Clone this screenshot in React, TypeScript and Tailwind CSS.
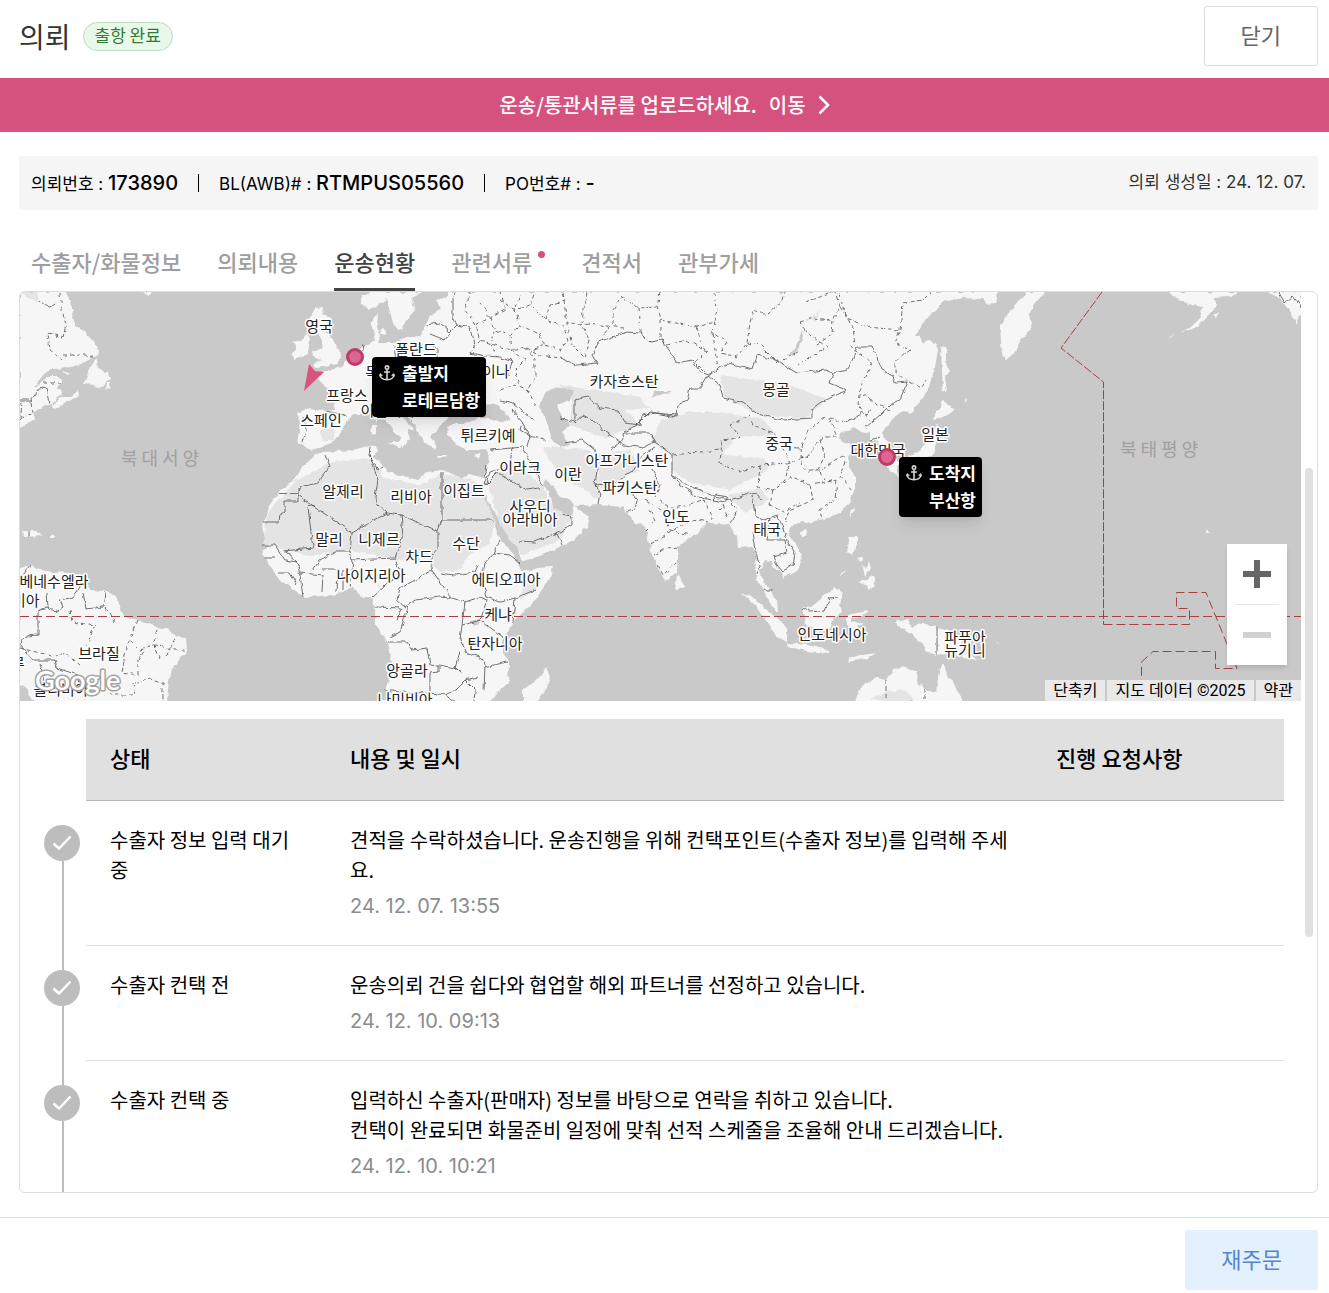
import { useState } from 'react'

const tabs = [
  { label: '수출자/화물정보' },
  { label: '의뢰내용' },
  { label: '운송현황' },
  { label: '관련서류', dot: true },
  { label: '견적서' },
  { label: '관부가세' },
]

const history = [
  {
    status: '수출자 정보 입력 대기 중',
    lines: ['견적을 수락하셨습니다. 운송진행을 위해 컨택포인트(수출자 정보)를 입력해 주세요.'],
    date: '24. 12. 07. 13:55',
  },
  {
    status: '수출자 컨택 전',
    lines: ['운송의뢰 건을 쉽다와 협업할 해외 파트너를 선정하고 있습니다.'],
    date: '24. 12. 10. 09:13',
  },
  {
    status: '수출자 컨택 중',
    lines: [
      '입력하신 수출자(판매자) 정보를 바탕으로 연락을 취하고 있습니다.',
      '컨택이 완료되면 화물준비 일정에 맞춰 선적 스케줄을 조율해 안내 드리겠습니다.',
    ],
    date: '24. 12. 10. 10:21',
  },
]

// Land outlines, in world pixels at zoom 2
const land = [
  // North America, east coast
  '20,292 66,292 73,310 74,325 83,330 93,340 98,350 97,357 92,358 83,363 73,367 52,368 43,375 35,387 40,384 47,377 58,377 62,380 57,387 62,394 52,403 40,408 33,413 35,420 20,428',
  '53,405 62,396 70,396 78,391 79,395 63,405 55,409',
  '97,358 98,368 108,373 110,380 102,385 97,389 95,385 83,384 87,377 92,365',
  '107,383 110,383 110,389 106,388',
  '62,371 71,373 68,375',
  '142,292 152,292 148,295',
  // British Isles
  '315,308 323,307 322,315 332,318 328,325 323,329 332,337 338,350 341,357 338,364 315,367 312,365 323,360 315,358 313,352 322,348 323,343 320,338 317,333 310,327 310,318',
  '293,342 302,340 307,333 310,340 308,353 295,359 292,355 297,348',
  // Scandinavia
  '360,302 368,310 385,302 387,297 388,305 392,320 397,330 403,329 405,322 415,310 412,300 422,292 370,292 362,296',
  '382,329 388,330 386,335 381,334',
  // Eurasia
  '315,378 322,373 330,370 342,367 345,362 355,355 360,348 367,345 375,340 372,327 372,318 378,313 377,327 380,337 378,343 393,343 407,338 420,337 423,330 427,323 430,315 442,310 437,300 447,297 447,292 997,292 995,302 987,303 983,299 963,298 953,300 942,302 930,315 915,335 920,337 923,343 928,340 937,345 938,350 935,367 928,390 917,405 910,413 900,412 887,425 882,433 888,443 895,457 899,463 897,477 892,473 886,463 883,450 878,442 870,440 870,433 857,430 855,427 840,433 839,440 848,443 853,450 847,458 850,467 855,477 855,487 850,502 840,513 820,520 807,523 802,522 795,522 790,528 788,535 795,543 800,553 802,562 797,570 783,578 782,572 773,567 772,562 765,560 760,570 763,582 770,590 777,600 778,612 772,607 765,593 757,580 755,570 757,557 752,547 738,548 737,537 728,525 713,523 708,522 697,533 678,547 678,557 677,572 665,581 658,568 650,550 647,533 643,525 635,523 627,513 622,507 600,505 577,506 570,500 560,496 552,486 545,480 544,486 550,494 553,507 562,515 572,517 575,503 578,510 590,517 587,527 573,540 563,545 550,552 522,562 519,553 517,547 507,530 497,517 487,500 482,488 484,477 487,465 488,453 485,449 478,450 467,450 453,443 448,435 447,427 455,424 460,420 448,418 442,425 435,432 430,437 437,445 435,450 427,445 420,435 415,425 408,417 400,408 390,400 395,412 405,420 415,430 408,430 410,440 402,447 400,437 390,425 378,412 370,410 362,415 352,415 347,423 340,433 335,440 323,447 310,450 303,445 297,444 300,423 297,413 310,408 327,411 335,410 333,398 330,390 322,383',
  '388,442 402,442 399,448',
  '371,425 376,425 376,435 372,435',
  '373,417 376,413 376,422',
  '437,455 447,455 446,457 438,457',
  '475,456 482,453 479,458',
  // Africa
  '484,478 473,475 460,478 442,470 427,472 418,480 407,477 387,472 385,467 373,457 378,450 370,445 353,450 323,452 315,455 310,460 302,467 295,480 280,491 268,507 262,527 267,545 262,553 267,562 278,578 293,590 303,597 323,596 337,594 353,588 362,597 372,597 375,607 375,623 388,643 393,667 385,690 392,702 490,702 497,693 508,683 509,662 503,653 503,640 513,622 533,603 550,578 553,567 537,568 522,572 518,562 510,550 500,540 493,520 485,507 479,492',
  '547,668 550,677 547,687 537,702 523,702 523,690 533,683',
  // South America
  '20,568 30,565 40,570 53,572 70,573 87,578 90,590 107,591 117,598 123,615 137,620 157,627 170,630 177,637 186,638 187,650 178,663 170,673 168,690 167,702 35,702 27,690 20,685',
  '22,531 35,531 43,536 23,537',
  '50,536 55,536 55,538 50,538',
  // Far East
  '1027,292 1007,315 1000,327 1002,353 1006,361 1013,355 1018,345 1023,337 1032,328 1030,312 1035,302 1045,292',
  '941,346 946,347 946,360 950,372 945,378 947,390 943,392 942,373',
  '942,400 955,410 943,418 933,420 935,413 940,408',
  '937,423 940,433 935,450 933,456 917,458 905,462 907,457 917,453 927,443 933,433',
  '963,402 967,399 965,403',
  '850,510 855,507 851,517',
  '800,532 807,530 806,536 801,536',
  // Alaska and the west coast
  '1168,292 1180,300 1192,305 1203,307 1200,317 1190,327 1180,333 1197,327 1210,313 1217,305 1213,298 1230,297 1240,292',
  '1168,338 1175,335 1171,336',
  '1213,315 1220,312 1217,318',
  '1267,292 1280,298 1290,312 1297,325 1298,317 1302,313 1302,292',
  '1206,529 1210,532 1206,532',
  // South-east Asia
  '677,573 685,587 678,591 676,583',
  '742,593 750,595 767,610 783,623 787,627 787,642 777,637 767,622 757,607',
  '787,643 807,645 828,650 828,653 807,651 788,647',
  '835,587 843,593 840,603 842,612 833,620 830,630 813,628 805,622 802,607 810,608 822,598',
  '847,615 868,611 868,613 852,618 850,623 863,622 857,627 860,640 853,638 850,628 847,634',
  '850,536 857,536 857,545 853,555 847,552',
  '858,582 867,580 873,575 875,585 868,590 865,585',
  '840,577 846,569 844,574',
  '857,558 863,556 862,562',
  '862,564 866,570 869,562 871,568 865,576',
  '847,658 862,655 875,653 866,659 848,662',
  '895,622 907,618 912,627 922,623 937,627 953,633 963,643 970,655 977,661 963,658 950,653 937,656 927,653 922,643 913,635 900,627',
  '996,641 1000,645 998,644',
  '855,702 860,687 877,677 887,680 893,670 902,666 918,672 917,682 927,690 937,692 940,670 943,663 948,677 955,682 958,693 963,702',
]

const water = [
  '448,418 455,400 465,395 480,400 487,405 495,403 505,412 510,420 500,422 480,417 465,424 452,424',
  '543,395 550,388 575,390 570,400 557,405 560,415 570,423 562,432 570,445 560,448 552,440 548,425 540,407',
  '785,357 795,350 802,330 803,340 795,354',
  '470,621 479,619 480,624 473,626',
  '650,397 655,391 672,391 660,395',
]

const desert = [
  '263,545 267,512 295,482 330,462 370,458 385,478 420,485 440,475 475,480 495,520 490,545 470,553 460,570 440,572 425,560 400,560 350,550 310,556 283,549',
  '487,482 512,462 543,486 553,507 572,517 560,540 522,555 500,525',
  '543,447 590,450 598,470 600,500 585,490 568,480 550,460',
  '560,385 610,392 640,398 650,408 625,410 640,425 605,438 570,425 572,400',
  '597,455 630,450 640,470 620,480 600,488',
  '660,420 690,412 720,412 765,420 775,435 735,438 722,455 765,458 768,470 730,490 690,482 672,470 672,455 652,442',
  '720,375 790,385 828,400 805,418 760,415 725,398',
  '20,292 38,292 39,303 28,298',
  '525,575 540,572 535,590 520,600',
  '870,700 885,692 905,690 915,702',
  '728,495 760,488 770,500 745,512',
  '320,430 333,428 335,440 322,442',
  '810,318 820,310 815,322',
]

const borders = [
  '20,400 31,400 41,387 46,388 49,403',
  '39,300 48,308 55,303',
  '455,292 453,300 453,317 457,325 470,328 475,350',
  '427,325 440,323 450,332 457,325',
  '430,334 445,340 450,333',
  '395,345 397,360',
  '432,342 437,350 437,357',
  '364,345 362,355 355,363',
  '470,353 485,356 500,357 512,362 508,375',
  '500,400 510,402 525,413 535,420',
  '512,410 522,422 530,436 545,440',
  '522,423 520,430 530,436 527,446',
  '304,418 306,430 303,443',
  '327,411 348,416',
  '560,358 577,365 597,363 592,355 598,342 627,332 640,333 650,342 662,340 678,363 692,360 702,373 708,375',
  '708,375 727,364 753,370 757,355 775,360 797,373 825,370 833,373 848,370 857,347 873,347 882,370 893,375 895,383 908,382 900,400 890,405 880,415 865,428',
  '833,373 830,383 847,390 822,402 812,410 812,418 783,420 760,415 743,403 723,398 720,385 708,375',
  '708,375 700,388 690,388 687,400 678,405 677,417 650,412 637,425 625,432',
  '560,418 575,422 575,400 587,397 600,408 617,410 625,423 640,425 642,415 655,413 677,415',
  '575,422 583,415 597,423 605,432 620,442 610,450',
  '620,442 625,433 650,433 655,442 643,448 625,445 620,442',
  '565,443 582,440 595,450 597,470 595,485 600,492 598,505',
  '595,485 615,483 632,472 642,455 655,447',
  '655,442 672,455 672,475 690,487 715,497 730,500 755,492 762,500',
  '672,475 680,485 695,495 710,500',
  '713,500 717,495 728,497 725,502 713,500',
  '730,500 737,510 733,520 730,524',
  '752,495 755,515 765,520 770,518',
  '632,492 637,500 635,510 627,512',
  '655,497 660,485 652,470',
  '770,518 767,540 785,540 787,553 773,557 777,565 783,572',
  '770,518 778,515 787,540 795,553 793,565 783,571',
  '752,533 755,550 760,565 757,575',
  '763,587 767,590 772,590',
  '870,440 880,437',
  '802,608 810,612 825,610 830,598 838,597',
  '937,627 937,656',
  '263,522 279,522 280,515 285,512 285,501 298,501 298,488',
  '298,493 300,487 318,483 322,477 330,467 326,455',
  '298,495 352,533 387,513 378,505 375,497 378,480 370,455',
  '370,446 369,455 378,470 383,467',
  '315,505 308,507 313,548 283,551',
  '387,513 401,515 438,531 438,548 432,555 432,570 400,588 397,600',
  '442,472 442,520 438,531',
  '442,520 493,520',
  '401,515 403,535 395,558 352,560 350,552 352,533',
  '350,552 335,552 320,560 313,570',
  '395,558 400,572 385,585 372,597',
  '432,570 445,590 452,598',
  '440,573 455,575 475,572 478,565',
  '500,540 493,553 485,563 482,580 487,597 500,602 515,598 513,622',
  '493,553 510,555 520,563',
  '515,598 535,590',
  '397,600 405,607 415,600 440,597 452,598 465,602 480,597 487,600',
  '410,602 400,632 390,637',
  '375,607 402,608 397,620',
  '465,602 462,625 480,620 487,600',
  '480,620 503,637',
  '462,625 460,640 467,653 480,657 485,665 484,690',
  '388,642 407,642 412,650 427,648 430,665 438,666 438,672 430,673 430,693',
  '385,690 400,692 430,693 445,695 455,690 465,680 478,677',
  '438,665 455,668 462,672 455,668 460,652',
  '445,695 455,702',
  '465,680 475,690 474,702',
  '484,667 508,662',
  '262,545 275,545 285,560 297,562 300,575 303,597',
  '285,551 297,562',
  '264,558 275,558',
  '300,573 323,575 322,592',
  '278,573 290,573 297,585',
  '323,569 338,569 337,592',
  '343,570 343,590',
  '353,560 350,588',
  '518,541 535,542 545,538 557,534 562,545',
  '557,534 572,525 572,517 562,515',
  '490,450 523,447 533,467 543,486',
  '485,485 497,473 527,490 540,488',
  '512,447 510,465 490,472 485,485',
  '487,465 484,485',
  '47,593 48,607 55,613 63,607 60,600 73,597 80,587 75,577',
  '83,592 86,609 103,607 105,592',
  '30,565 23,575',
  '48,607 38,610 38,635 26,636 20,645 33,660 55,660 57,668 78,675 82,690',
  '40,664 45,675 38,695',
  '29,531 29,537',
  '1279,293 1285,303 1293,296 1301,307',
]

const provinces = [
  '60,293 62,310 66,325 63,337 48,333 50,350 62,359',
  '63,355 92,355 92,360',
  '43,383 60,383',
  '22,402 20,427',
  '31,402 33,413 22,418',
  '470,355 480,340 475,325 490,318 505,310 500,292',
  '475,325 465,310 470,292',
  '490,318 495,330 510,335 520,325 515,310 530,305 545,320 560,325',
  '480,340 495,345 510,350 525,347 540,355 560,358',
  '495,330 490,342 497,357',
  '510,335 512,350 525,360 515,370 520,385',
  '520,325 540,335 545,345 530,352',
  '530,305 535,292',
  '545,320 550,305 565,300 562,292',
  '525,347 535,360 535,378 527,390 535,405',
  '545,345 560,350 568,340 563,325',
  '500,300 515,310 520,295',
  '480,302 490,318',
  '500,390 515,385 530,392',
  '563,293 567,323 600,325 623,328',
  '567,323 572,345 585,358 590,340 582,325',
  '588,293 583,313 582,325',
  '623,295 613,310 613,323 603,335',
  '623,297 638,308 657,307 660,292',
  '638,308 640,332 650,342',
  '657,307 660,320 697,327 715,322 717,310 715,293',
  '660,320 660,340 667,345 687,340 707,352 695,362 705,372',
  '697,327 700,340 707,352',
  '715,322 713,333 727,343 720,353 737,357 747,343',
  '713,333 715,350 718,368',
  '747,343 750,323 753,310 767,315 783,300 785,292',
  '747,343 760,345 773,358 780,362 798,352',
  '805,302 820,297 830,292',
  '800,322 813,318 833,320 840,307 835,292',
  '800,322 807,333 827,347 798,365',
  '840,307 853,327 855,345',
  '840,293 845,317 867,327 900,330 895,343 910,350 895,362 895,373 910,382',
  '900,330 903,303 923,300 930,293',
  '820,320 833,320 832,335 815,345',
  '850,345 857,353 872,362 860,387 858,403 870,422',
  '863,395 880,405 892,413',
  '845,422 867,413',
  '910,382 922,388 927,380',
  '730,425 750,415 753,425 773,433 782,447 800,448 808,430 825,417 845,422 870,410',
  '730,425 740,438 722,440 720,463 740,472 760,465 787,463 807,457',
  '673,455 720,450',
  '760,465 758,487 773,490 793,477 810,485 837,480',
  '807,457 823,437 837,437 830,420',
  '782,447 790,462 785,480 775,490',
  '800,448 803,470 820,470 835,460 845,455',
  '810,485 813,500 790,510 785,525',
  '837,480 835,500 820,510 822,520',
  '820,440 825,455 818,470 825,480',
  '845,462 840,475 852,490',
  '773,490 770,505 783,512 800,502',
  '645,500 660,510 690,505 705,500 712,520',
  '660,500 668,505 665,515 670,530 690,535',
  '650,545 665,535 680,525 697,520 708,522',
  '655,555 665,548 680,547',
  '658,565 663,575 677,562',
  '645,530 655,520 650,510',
  '718,510 723,505 727,515',
  '20,648 40,653 58,656 65,652 80,665',
  '70,610 72,622 95,625 87,645',
  '105,608 115,623',
  '137,620 130,638 125,655 122,672 138,675',
  '130,640 140,650 155,645 175,650 186,650',
  '157,630 153,645 160,660',
  '165,655 175,640',
  '138,675 138,660 145,650',
  '135,683 150,678 163,683 163,701',
  '133,683 135,695 110,695 108,685',
  '886,680 886,701',
  '924,688 924,701',
]

const countries = [
  ['영국', 319, 332], ['폴란드', 416, 355], ['독일', 379, 378], ['우크라이나', 475, 377],
  ['프랑스', 347, 401], ['이탈리아', 388, 416], ['스페인', 321, 426], ['튀르키예', 488, 441],
  ['이라크', 520, 473], ['이란', 568, 480], ['카자흐스탄', 624, 387], ['몽골', 776, 395],
  ['중국', 779, 449], ['일본', 935, 440], ['대한민국', 878, 456], ['아프가니스탄', 627, 466],
  ['파키스탄', 630, 493], ['인도', 676, 522], ['태국', 767, 535], ['알제리', 343, 497],
  ['리비아', 411, 502], ['이집트', 464, 496], ['사우디', 530, 512], ['아라비아', 530, 525],
  ['말리', 329, 545], ['니제르', 379, 545], ['차드', 419, 562], ['수단', 466, 549],
  ['나이지리아', 371, 581], ['에티오피아', 506, 585], ['케냐', 498, 620], ['탄자니아', 495, 649],
  ['앙골라', 407, 676], ['나미비아', 405, 705], ['인도네시아', 832, 640], ['파푸아', 965, 643],
  ['뉴기니', 965, 656], ['브라질', 99, 659], ['베네수엘라', 54, 587], ['콜롬비아', 12, 606],
  ['볼리비아', 61, 695], ['페루', 11, 669],
] as const

function WorldMap() {
  return (
    <svg viewBox="20 292 1281 409" className="block h-full w-full" aria-hidden="true">
      <defs>
        {/* roughens coasts and borders */}
        <filter id="coast" x="0" y="0" width="100%" height="100%">
          <feTurbulence type="fractalNoise" baseFrequency="0.14" numOctaves="2" seed="4" result="n" />
          <feDisplacementMap in="SourceGraphic" in2="n" scale="5" xChannelSelector="R" yChannelSelector="G" />
        </filter>
      </defs>
      <rect x="0" y="280" width="1340" height="440" fill="#c9c9c9" />
      <g filter="url(#coast)">
        <rect x="0" y="280" width="1340" height="440" fill="#c9c9c9" />
        {land.map((p) => <polygon key={p} points={p} fill="#f6f6f6" />)}
        {desert.map((p) => <polygon key={p} points={p} fill="#e4e4e4" />)}
        {water.map((p) => <polygon key={p} points={p} fill="#c9c9c9" />)}
        <g fill="none" stroke="#4d4d4d" strokeWidth="0.8">
          {borders.map((p) => <polyline key={p} points={p} />)}
          <g strokeDasharray="4 3">
            {provinces.map((p) => <polyline key={p} points={p} />)}
          </g>
        </g>
      </g>
      <path d="M279 493.500H298" stroke="#777" strokeDasharray="8 3" />
      <g fill="none" stroke="#a83f3f" strokeWidth="1" strokeDasharray="9 4">
        <path d="M20 616.500H1301" />
        <path d="M1102 292L1061 348L1103.500 382V624.500" strokeDasharray="9 2" />
        <path d="M1103.500 624.500H1189.500V608.500H1176.500V592.500H1206L1237 668.500H1215.500V651.500H1153L1141.500 662V701" />
      </g>
      <g fill="#a0a0a0" fontSize="18" letterSpacing="4" textAnchor="middle">
        <text x="162" y="465">북대서양</text>
        <text x="1161" y="456">북태평양</text>
      </g>
      <g fill="#222" stroke="#fff" strokeWidth="3" strokeLinejoin="round" paintOrder="stroke" fontSize="15" textAnchor="middle">
        {countries.map(([name, x, y]) => <text key={name} x={x} y={y}>{name}</text>)}
      </g>
      <text
        x="35" y="690" fontSize="27" fontWeight="600" fill="#fff" stroke="#a3a3a3" strokeWidth="3"
        paintOrder="stroke" strokeLinejoin="round" fontFamily="Lato, sans-serif"
      >
        Google
      </text>
      <path d="M309 364L315 371L324 372L304 391Z" fill="#d9537f" />
      <g fill="#dd6592" stroke="#c03a67" strokeWidth="3">
        <circle cx="355" cy="357" r="7.500" />
        <circle cx="887" cy="457" r="7.500" />
      </g>
    </svg>
  )
}

function PortLabel({ title, port, className }: { title: string; port: string; className: string }) {
  return (
    <div className={`absolute rounded-sm bg-black pt-[2px] pr-[6px] pb-1 pl-[7px] text-[17px] leading-[27px] font-bold text-white shadow-lg ${className}`}>
      <div className="flex items-center gap-[7px]">
        <svg width="16" height="16" viewBox="0 0 16 16" fill="none" stroke="#d4d4d4" strokeWidth="1.600">
          <circle cx="8" cy="2.600" r="1.700" />
          <path d="M8 4.500V15M5 7h6M1 9.500C1.500 13 4.500 14.800 8 14.800S14.500 13 15 9.500" />
          <path d="M0 11.500L1 8l3 2.500zM16 11.500L15 8l-3 2.500z" fill="#d4d4d4" stroke="none" />
        </svg>
        {title}
      </div>
      <div className="pl-[23px]">{port}</div>
    </div>
  )
}

export default function App() {
  const [active, setActive] = useState(2)

  return (
    <div className="flex h-screen flex-col overflow-hidden bg-white font-['Noto_Sans_CJK_KR',sans-serif] text-black">
      <header className="flex justify-between pt-[6px] pr-[11px] pb-3 pl-[19px]">
        <div className="flex h-[60px] items-center gap-3">
          <h1 className="text-[28px] leading-[42px] text-[#333]">의뢰</h1>
          <span className="rounded-full border border-[#b5dfb8] bg-[#eaf7eb] px-[11px] pb-[3px] text-[17px] leading-6 text-[#2e7d32]">
            출항 완료
          </span>
        </div>
        <button className="h-[60px] rounded-[3px] border border-[#dcdcdc] px-9 pb-1 text-[22px] text-[#666]">닫기</button>
      </header>

      <button className="flex h-[54px] shrink-0 items-center justify-center gap-3 bg-[#d6527e] text-[20px] font-medium text-white">
        <span>운송/통관서류를 업로드하세요.</span>
        <span>이동</span>
        <svg width="12" height="20" viewBox="0 0 12 20" fill="none" stroke="currentColor" strokeWidth="2.500">
          <path d="M1.500 1.500L10 10L1.500 18.500" />
        </svg>
      </button>

      <section className="mt-6 mr-[11px] ml-[19px] flex h-[54px] shrink-0 items-center justify-between rounded-[3px] bg-[#f5f5f5] px-3 font-['Inter','Noto_Sans_CJK_KR',sans-serif] text-[17px]">
        <div className="flex items-center gap-5">
          <p>의뢰번호 : <b className="text-[20px] font-medium">173890</b></p>
          <i className="h-[18px] w-px bg-black" />
          <p>BL(AWB)# : <b className="text-[20px] font-medium">RTMPUS05560</b></p>
          <i className="h-[18px] w-px bg-black" />
          <p>PO번호# : <b className="text-[20px] font-medium">-</b></p>
        </div>
        <p className="text-[#333]">의뢰 생성일 : 24. 12. 07.</p>
      </section>

      <nav className="mt-6 ml-[31px] flex shrink-0 gap-9 text-[22px] font-medium">
        {tabs.map((t, i) => (
          <button
            key={t.label}
            onClick={() => setActive(i)}
            className={`flex h-[57px] border-b-3 leading-[54px] ${
              i === active ? 'border-[#424242] text-[#424242]' : 'border-transparent text-[#9e9e9e]'
            }`}
          >
            {t.label}
            {t.dot && <span className="mt-[17px] ml-[6px] size-[7px] rounded-full bg-[#d6527e]" />}
          </button>
        ))}
      </nav>

      <main className="mr-[11px] mb-6 ml-[19px] flex min-h-0 flex-1 overflow-hidden rounded-md border border-[#dedede]">
        <div className="min-w-0 flex-1">
          <div className="relative flex h-[409px] justify-center overflow-hidden bg-[#c9c9c9]">
            <div className="relative h-[409px] w-[1281px] shrink-0">
              <WorldMap />
              <PortLabel title="출발지" port="로테르담항" className="top-[65px] left-[352px]" />
              <PortLabel title="도착지" port="부산항" className="top-[165px] left-[879px]" />
            </div>
            <div className="absolute right-[14px] bottom-9 w-[60px] bg-white px-2 shadow-md">
              <button aria-label="확대" className="flex h-[61px] w-full items-center justify-center border-b border-[#e6e6e6]">
                <svg width="28" height="28" viewBox="0 0 28 28" fill="#666">
                  <path d="M11 0h6v11h11v6H17v11h-6V17H0v-6h11z" />
                </svg>
              </button>
              <button aria-label="축소" disabled className="flex h-[60px] w-full items-center justify-center">
                <span className="h-[6px] w-7 bg-[#d1d1d1]" />
              </button>
            </div>
            <div className="absolute right-0 bottom-0 flex gap-[2px] font-['Roboto','Noto_Sans_CJK_KR',sans-serif] text-[16px] leading-[21px]">
              <button className="bg-[#e9e9e9] px-2">단축키</button>
              <span className="bg-[#e9e9e9] px-2">지도 데이터 ©2025</span>
              <a href="#terms" className="bg-[#e9e9e9] px-2">약관</a>
            </div>
          </div>

          <div className="mt-[18px] pr-[17px]">
            <table className="w-full table-fixed border-separate border-spacing-0 text-left">
              <colgroup>
                <col className="w-[66px]" />
                <col className="w-[240px]" />
                <col />
                <col className="w-[252px]" />
              </colgroup>
              <thead>
                <tr className="h-[82px] text-[22px]">
                  <td />
                  <th className="border-b border-[#b5b5b5] bg-[#e0e0e0] pb-1 pl-6 font-medium">상태</th>
                  <th className="border-b border-[#b5b5b5] bg-[#e0e0e0] pb-1 pl-6 font-medium">내용 및 일시</th>
                  <th className="border-b border-[#b5b5b5] bg-[#e0e0e0] pb-1 pl-6 font-medium">진행 요청사항</th>
                </tr>
              </thead>
              <tbody className="align-top text-[20px] leading-[30px]">
                {history.map((h) => (
                  <tr key={h.date}>
                    <td className="relative pt-6 pl-6">
                      <span className="flex size-9 items-center justify-center rounded-full bg-[#bdbdbd]">
                        <svg width="20" height="16" viewBox="0 0 20 16" fill="none" stroke="#fff" strokeWidth="2.500">
                          <path d="M1.500 8.500L7 13.500L18.500 1.500" />
                        </svg>
                      </span>
                      <span className="absolute top-[60px] -bottom-6 left-[42px] w-[2px] bg-[#bdbdbd]" />
                    </td>
                    <td className="border-b border-[#dedede] px-6 py-6">{h.status}</td>
                    <td className="border-b border-[#dedede] px-6 py-6">
                      {h.lines.map((l) => <p key={l}>{l}</p>)}
                      <p className="mt-[6px] font-['Inter'] text-[#8c8c8c]">{h.date}</p>
                    </td>
                    <td className="border-b border-[#dedede] px-6 py-6" />
                  </tr>
                ))}
              </tbody>
            </table>
          </div>
        </div>
        <div className="w-4 shrink-0 pt-44 pl-1">
          <div className="h-[469px] w-2 rounded-full bg-[#e0e0e0]" />
        </div>
      </main>

      <footer className="flex justify-end border-t border-[#dedede] pt-3 pr-[11px] pb-[3px]">
        <button className="h-[60px] rounded-[3px] bg-[#e3f0fd] px-9 pb-1 text-[22px] text-[#5585d1]">재주문</button>
      </footer>
    </div>
  )
}
